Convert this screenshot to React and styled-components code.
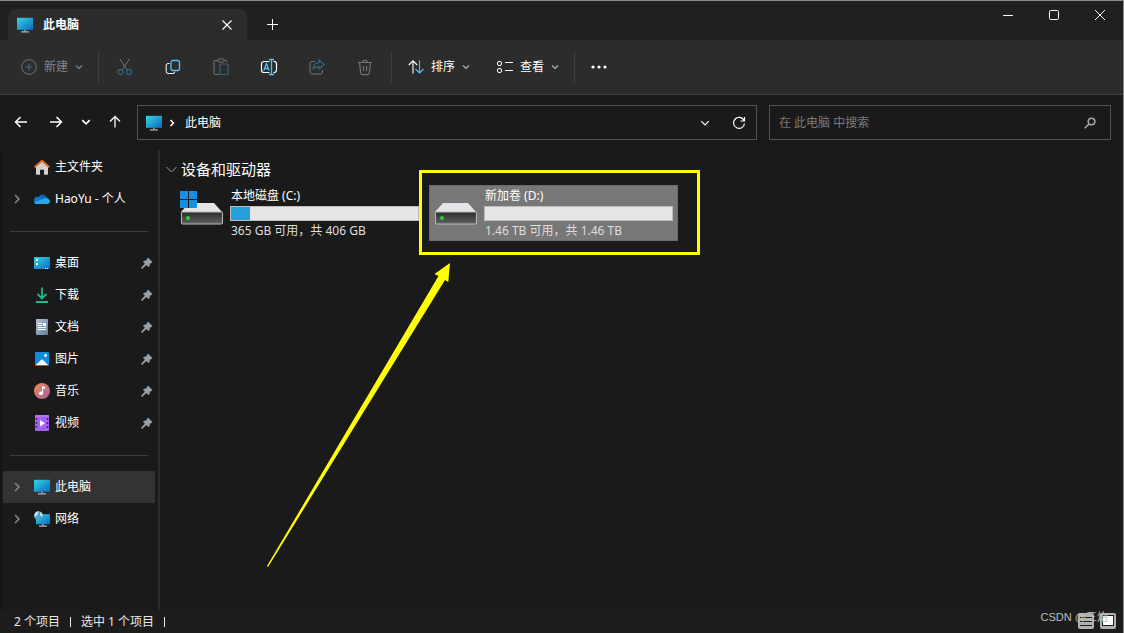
import React from "react";
import styled, { createGlobalStyle } from "styled-components";

const Global = createGlobalStyle`
  *, *::before, *::after { box-sizing: border-box; }
  body { margin: 0; background: #1a1a1a; }
  button, input { font: inherit; color: inherit; }
  svg { display: block; flex: none; }
`;

const Window = styled.div`
  display: flex;
  flex-direction: column;
  min-height: 100vh;
  border-top: 1px solid #8a8d8d;
  border-right: 1px solid #8a8a8a;
  background: #1a1a1a;
  color: #fff;
  font: 12px/16px "Noto Sans", "Noto Sans CJK SC", sans-serif;
`;

/* Title bar */
const TitleBar = styled.header`
  display: flex;
  align-items: flex-end;
  height: 39px;
  padding-left: 8px;
  background: #202020;
`;

const Tab = styled.div`
  display: flex;
  align-items: center;
  gap: 10px;
  width: 239px;
  height: 31px;
  padding: 0 10px 0 9px;
  border-radius: 8px 8px 0 0;
  background: #2c2c2c;
  font-weight: 700;
`;

const TabTitle = styled.span`
  flex: 1;
`;

const PlainButton = styled.button`
  display: inline-flex;
  align-items: center;
  justify-content: center;
  flex: none;
  width: ${(p) => p.$w || 20}px;
  height: ${(p) => p.$h || 20}px;
  padding: 0;
  border: 0;
  background: transparent;
  color: #fff;
`;

const NewTab = styled(PlainButton)`
  margin-left: 10px;
`;

const WindowControls = styled.div`
  display: flex;
  align-self: flex-start;
  margin-left: auto;
`;

/* Command bar */
const Toolbar = styled.div`
  display: flex;
  align-items: center;
  height: 55px;
  padding-left: 21px;
  border-bottom: 1px solid #3c3c3c;
  background: #2c2c2c;
`;

const Command = styled.button`
  display: flex;
  align-items: center;
  gap: 7px;
  height: 32px;
  padding: 0;
  margin-right: ${(p) => p.$after}px;
  border: 0;
  background: transparent;
  color: ${(p) => (p.$dim ? "#858585" : "#fff")};
`;

const ToolDivider = styled.span`
  width: 1px;
  height: 32px;
  background: #3f3f3f;
`;

const ToolIcons = styled.div`
  display: flex;
  padding: 0 2px;
`;

const SortGroup = styled.div`
  display: flex;
  padding-left: 16px;
`;

/* Navigation row */
const NavBar = styled.div`
  display: flex;
  align-items: center;
  height: 55px;
  padding-right: 12px;
`;

const NavButtons = styled.div`
  display: flex;
  align-items: center;
  align-self: flex-start;
  flex: none;
  width: 137px;
  height: 54px;
  padding-left: 11px;
`;

const AddressBar = styled.div`
  display: flex;
  align-items: center;
  gap: 7px;
  flex: 620 1 620px;
  min-width: 0;
  height: 35px;
  padding-left: 8px;
  border: 1px solid #535353;
`;

const Crumb = styled.a`
  flex: 1;
  padding-left: 3px;
  color: #fff;
  text-decoration: none;
`;

const SearchBox = styled.label`
  display: flex;
  align-items: center;
  flex: 342 1 342px;
  min-width: 0;
  height: 35px;
  margin-left: 12px;
  padding: 0 14px 0 9px;
  border: 1px solid #535353;
`;

const SearchInput = styled.input`
  flex: 1;
  min-width: 0;
  padding: 0;
  border: 0;
  outline: 0;
  background: transparent;
  &::placeholder { color: #7a7a7a; opacity: 1; }
`;

/* Body */
const Body = styled.div`
  display: flex;
  flex: 1;
`;

const Sidebar = styled.nav`
  flex: none;
  width: 160px;
  padding: 1px 3px 0 1px;
  border-left: 2px solid #151515;
  border-right: 2px solid #2b2b2b;
`;

const SideItem = styled.a`
  display: flex;
  align-items: center;
  height: 32px;
  padding: 0 2px 0 9px;
  border-radius: 2px;
  background: ${(p) => (p.$active ? "#333" : "transparent")};
  color: #fff;
  text-decoration: none;
`;

const Expander = styled.span`
  width: 22px;
  color: #858585;
`;

const SideLabel = styled.span`
  flex: 1;
  margin-left: 5px;
  white-space: nowrap;
`;

const SideDivider = styled.hr`
  height: 1px;
  margin: 16px 7px 15px;
  border: 0;
  background: #3d3d3d;
`;

const Content = styled.main`
  flex: 1;
  padding: 9px 6px 0;
`;

const GroupHeading = styled.h2`
  display: flex;
  align-items: center;
  gap: 4px;
  height: 20px;
  margin: 0 0 6px;
  font-size: 15px;
  font-weight: 400;
  line-height: 20px;
`;

const Drives = styled.div`
  display: flex;
  gap: 5px;
  padding-left: 9px;
`;

const DriveTile = styled.div`
  position: relative;
  display: flex;
  gap: 7px;
  width: 249px;
  height: 56px;
  padding: 2px 0 0 4px;
  border: 1px solid ${(p) => (p.$selected ? "#6a6a6a" : "transparent")};
  background: ${(p) => (p.$selected ? "#777" : "transparent")};
`;

const DriveInfo = styled.div`
  width: 189px;
`;

const DriveName = styled.div`
  padding-left: 1px;
`;

const Capacity = styled.div`
  height: 15px;
  margin: 2px 0;
  border: 1px solid #bcbcbc;
  background: #e6e6e6;
`;

const Used = styled.div`
  width: ${(p) => p.$percent}%;
  height: 100%;
  background: #26a0da;
`;

const DriveSpace = styled.div`
  padding-left: 1px;
  color: #dedede;
  white-space: nowrap;
`;

const Highlight = styled.div`
  position: absolute;
  left: -11px;
  top: -16px;
  width: 281px;
  height: 85px;
  border: 3px solid #ff0;
`;

const Pointer = styled.svg`
  position: absolute;
  left: -163px;
  top: 77px;
`;

/* Status bar */
const StatusBar = styled.footer`
  position: relative;
  display: flex;
  align-items: center;
  gap: 10px;
  height: 23px;
  padding: 0 7px 0 14px;
  background: #1c1c1c;
  color: #e8e8e8;
`;

const StatusDivider = styled.span`
  width: 1px;
  height: 10px;
  background: #eee;
`;

const ViewButtons = styled.div`
  display: flex;
  gap: 6px;
  margin: 0 0 2px auto;
`;

const Watermark = styled.span`
  position: absolute;
  right: 15px;
  top: -1px;
  color: #bdbdbd;
  font: 11px/16px "Liberation Sans", "Noto Sans CJK SC", sans-serif;
`;

const Stroke = ({ w = 16, h = w, vb, sw = 1, children, ...rest }) => (
  <svg width={w} height={h} viewBox={vb || `0 0 ${w} ${h}`} fill="none" stroke="currentColor" strokeWidth={sw} aria-hidden="true" {...rest}>
    {children}
  </svg>
);

const ChevronDown = ({ size = 8, sw = 1.2, color }) => (
  <Stroke w={size} vb="0 0 8 8" sw={sw} color={color}><path d="M1 2.500l3 3 3-3" /></Stroke>
);

const ChevronRight = () => (
  <Stroke w={10} sw={1.6}><path d="M3 1l4 4-4 4" /></Stroke>
);

const Monitor = () => (
  <svg width="16" height="16" viewBox="0 0 16 16" aria-hidden="true">
    <defs>
      <linearGradient id="screen" x1="0" y1="0" x2="1" y2="1">
        <stop stopColor="#35d4e2" /><stop offset="1" stopColor="#0c6ac4" />
      </linearGradient>
    </defs>
    <path d="M7 12h2v2.500H7z" fill="#7c8791" />
    <path d="M4 14.300h8v1.200H4z" fill="#b5bdc4" />
    <path d="M0 .8h16v12H0z" fill="url(#screen)" />
  </svg>
);

const NetworkIcon = () => (
  <svg width="16" height="16" viewBox="0 0 16 16" aria-hidden="true">
    <path d="M8 13h2v2H8z" fill="#7c8791" /><path d="M5 14.500h8v1.200H5z" fill="#b5bdc4" />
    <path d="M2 3.200h14v10H2z" fill="url(#screen)" />
    <circle cx="4.500" cy="4.700" r="4.500" fill="#4d9fca" />
    <path d="M.4 4C1 1.500 3 .2 5 .3L4 2.400l-1 2L.8 6zM6 1l2.500 2-.3 3-2-1.500z" fill="#c7e6f2" />
  </svg>
);

const HomeIcon = () => (
  <svg width="16" height="16" viewBox="0 0 16 16" aria-hidden="true">
    <path d="M2 6.500L8 1.500l6 5V15a.7.7 0 0 1-.7.7H10v-5H6v5H2.700A.7.7 0 0 1 2 15z" fill="#d2d2d2" />
    <path d="M.7 8.200L8 1.700l7.300 6.500" fill="none" stroke="#e8711b" strokeWidth="2" strokeLinejoin="round" />
  </svg>
);

const CloudIcon = () => (
  <svg width="16" height="16" viewBox="0 0 16 16" aria-hidden="true">
    <path d="M4.500 6A4.600 4.600 0 0 1 13 7.200L9 10H2z" fill="#0a63c2" />
    <path d="M3.500 13a3.600 3.600 0 0 1 .3-7.200c2 0 3.200.8 5 2.200L6 13z" fill="#0f78d4" />
    <path d="M2.500 13C1 13 .3 12.300.3 11.300L9 8c1-.7 2-1 3.300-1C14.600 7.300 16 8.700 16 10.300 16 12 14.800 13 13.200 13z" fill="#28a8ea" />
  </svg>
);

const DesktopIcon = () => (
  <svg width="16" height="16" viewBox="0 0 16 16" aria-hidden="true">
    <rect y="2" width="16" height="12" rx="1" fill="url(#screen)" />
    <path d="M2 4h2v2H2zM2 8h2v2H2z" fill="#fff" />
    <path d="M11 13h1v1h-1zM13 13h1v1h-1z" fill="#fff" />
  </svg>
);

const DownloadIcon = () => (
  <Stroke sw={1.8}>
    <path d="M8 .5v11M3.500 7l4.500 4.500L12.500 7" stroke="#20b78a" />
    <path d="M2 15h12" stroke="#2ac4a0" />
  </Stroke>
);

const DocumentIcon = () => (
  <svg width="16" height="16" viewBox="0 0 16 16" aria-hidden="true">
    <defs><linearGradient id="paper" x1="0" y1="0" x2="1" y2="1"><stop stopColor="#b5c6d6" /><stop offset="1" stopColor="#5e7d9c" /></linearGradient></defs>
    <rect x="2" width="12" height="16" rx="1" fill="url(#paper)" />
    <path d="M4 4.500h4M4 6.500h4M4 8.500h8M4 10.500h8" stroke="#fff" />
    <path d="M9 4h3v3H9z" fill="#fff" />
  </svg>
);

const PictureIcon = () => (
  <svg width="16" height="16" viewBox="0 0 16 16" aria-hidden="true">
    <rect x="1" y="1" width="14" height="14" rx="1" fill="#128bdc" />
    <path d="M2 14l5.200-5.200a1.200 1.200 0 0 1 1.600 0L14 14z" fill="#fff" />
    <circle cx="11.500" cy="4.500" r="1.400" fill="#fff" />
  </svg>
);

const MusicIcon = () => (
  <svg width="16" height="16" viewBox="0 0 16 16" aria-hidden="true">
    <defs><linearGradient id="disc" x1="0" y1="0" x2="1" y2="1"><stop stopColor="#f18b4e" /><stop offset="1" stopColor="#a05fa7" /></linearGradient></defs>
    <circle cx="8" cy="8" r="8" fill="url(#disc)" />
    <path d="M8 3l3 1v2L9 5.500v5a2 1.800 0 1 1-1-1.700z" fill="#fff" />
  </svg>
);

const VideoIcon = () => (
  <svg width="16" height="16" viewBox="0 0 16 16" aria-hidden="true">
    <rect x="1" width="14" height="16" rx="1" fill="#a562ef" />
    <path d="M1 1h14" stroke="#bf8df5" />
    <path d="M2.500 3v12M13.500 3v12" stroke="#4b1d8a" strokeWidth="1.500" strokeDasharray="2 2" />
    <path d="M6 5l5 3.200-5 3.200z" fill="#fff" />
  </svg>
);

const PinIcon = () => (
  <svg width="12" height="12" viewBox="0 0 12 12" aria-hidden="true">
    <path d="M7 .8L11.200 5 10.500 5.800 9 6.200 8 9.800 5.200 7.900 1.300 11.500l-.9.100.2-1L4 6.800 2.200 4.400 6 3.200l.2-1.700z" fill="#97a1aa" stroke="#97a1aa" strokeWidth=".5" />
  </svg>
);

const DriveIcon = ({ system }) => (
  <svg width="43" height="44" viewBox="0 0 43 44" aria-hidden="true">
    <defs><linearGradient id="case" x1="0" y1="0" x2="0" y2="1"><stop stopColor="#2c2c2c" /><stop offset="1" stopColor="#626262" /></linearGradient></defs>
    <path d="M9 15h25l8 9H1z" fill="#e2e4e7" />
    <rect x="1.500" y="24" width="41" height="12" rx="1" fill="url(#case)" stroke="#b9b9b9" />
    <circle cx="8" cy="30" r="2" fill="#22d43a" />
    {system && (
      <>
        <path d="M0 3h17v17H0z" fill="#1a1a1a" />
        <path d="M0 3h8v8H0zM9 3h8v8H9zM0 12h8v8H0zM9 12h8v8H9z" fill="#1790e0" />
      </>
    )}
  </svg>
);

const DIM = "#737373";
const DIM_BLUE = "#34617b";
const BLUE = "#4cc2ff";

const tools = [
  ["剪切", <Stroke w={18} color={DIM}><path d="M4 1l7.500 11.500M13.500 1L6 12.500" /><g stroke={DIM_BLUE} strokeWidth="1.300"><circle cx="4.500" cy="14" r="2.500" /><circle cx="13" cy="14" r="2.500" /></g></Stroke>],
  ["复制", <Stroke w={16}><path d="M4.500 4.500H3A1.800 1.800 0 0 0 1.200 6.300v6.200A2 2 0 0 0 3.200 14.500H8a1.800 1.800 0 0 0 1.800-1.800" /><rect x="6" y="1.500" width="8.500" height="10" rx="2" stroke={BLUE} strokeWidth="1.300" /></Stroke>],
  ["粘贴", <Stroke w={18} color={DIM}><path d="M6 2.500H3A1 1 0 0 0 2 3.500v12a1 1 0 0 0 1 1h4M12 2.500h2a1 1 0 0 1 1 1V4" /><rect x="5.500" y="1" width="6.500" height="3" rx="1.500" /><rect x="8" y="6" width="8" height="10.500" rx="1" stroke={DIM_BLUE} strokeWidth="1.200" /></Stroke>],
  ["重命名", <Stroke w={18}><path d="M9.500 3.500H4A2.500 2.500 0 0 0 1.500 6v6A2.500 2.500 0 0 0 4 14.500h5.500M13.500 3.500A2.500 2.500 0 0 1 16.500 6v6a2.500 2.500 0 0 1-3 2.500" strokeWidth="1.200" /><path d="M9 1.500h5M9 16.500h5M11.500 1.500v15M3.800 12.500L6.500 5.500l2.700 7M4.700 10.500h3.600" stroke={BLUE} strokeWidth="1.300" /></Stroke>],
  ["共享", <Stroke w={18} color={DIM}><path d="M7 3.500H4A2 2 0 0 0 2 5.500v8.500a2 2 0 0 0 2 2h8.500a2 2 0 0 0 2-2v-2" /><path d="M11 2l5 4.500L11 11V8.500C8 8.500 6.200 9.300 5 11.500 5 7.500 7.500 5 11 4.700z" stroke={DIM_BLUE} strokeWidth="1.300" /></Stroke>],
  ["删除", <Stroke w={18} color={DIM}><path d="M2 4.500h14M7 4.200a2 2 0 0 1 4 0M3.500 4.500l1.300 11a1.500 1.500 0 0 0 1.500 1.200h5.400a1.500 1.500 0 0 0 1.500-1.200l1.300-11M7.500 8v5M10.500 8v5" strokeWidth="1.200" /></Stroke>],
];

const quick = [
  ["桌面", <DesktopIcon />],
  ["下载", <DownloadIcon />],
  ["文档", <DocumentIcon />],
  ["图片", <PictureIcon />],
  ["音乐", <MusicIcon />],
  ["视频", <VideoIcon />],
];

const SideRow = ({ label, icon, expandable, pinned, active }) => (
  <SideItem href="#" $active={active}>
    <Expander>{expandable && <ChevronRight />}</Expander>
    {icon}
    <SideLabel>{label}</SideLabel>
    {pinned && <PinIcon />}
  </SideItem>
);

const Drive = ({ name, space, used, system, selected, children }) => (
  <DriveTile $selected={selected}>
    <DriveIcon system={system} />
    <DriveInfo>
      <DriveName>{name}</DriveName>
      <Capacity><Used $percent={used} /></Capacity>
      <DriveSpace>{space}</DriveSpace>
    </DriveInfo>
    {children}
  </DriveTile>
);

export default function App() {
  return (
    <>
      <Global />
      <Window>
        <TitleBar>
          <Tab>
            <Monitor />
            <TabTitle>此电脑</TabTitle>
            <PlainButton aria-label="关闭标签页"><Stroke w={10} sw={1.1}><path d="M.5.5l9 9M9.500.5l-9 9" /></Stroke></PlainButton>
          </Tab>
          <NewTab $w={30} $h={32} aria-label="新建标签页"><Stroke w={11}><path d="M5.500 0v11M0 5.500h11" /></Stroke></NewTab>
          <WindowControls>
            <PlainButton $w={46} $h={28} aria-label="最小化"><Stroke w={10}><path d="M0 5.500h10" /></Stroke></PlainButton>
            <PlainButton $w={46} $h={28} aria-label="最大化"><Stroke w={10}><rect x=".5" y=".5" width="9" height="9" rx="1" /></Stroke></PlainButton>
            <PlainButton $w={46} $h={28} aria-label="关闭"><Stroke w={10}><path d="M0 0l10 10M10 0L0 10" /></Stroke></PlainButton>
          </WindowControls>
        </TitleBar>

        <Toolbar>
          <Command $dim $after={15}>
            <Stroke w={16} color={DIM}><circle cx="8" cy="8" r="7.300" /><path d="M8 4.500v7M4.500 8h7" stroke="#3b7596" /></Stroke>
            新建
            <ChevronDown />
          </Command>
          <ToolDivider />
          <ToolIcons>
            {tools.map(([label, icon]) => (
              <PlainButton key={label} $w={48} $h={32} aria-label={label}>{icon}</PlainButton>
            ))}
          </ToolIcons>
          <ToolDivider />
          <SortGroup>
            <Command $after={27}>
              <Stroke w={16} sw={1.1}><path d="M5 14.500V2M.8 6L5 1.800 9.200 6" /><path d="M11.500 1.500V14M7.500 10l4 4 4-4" stroke={BLUE} /></Stroke>
              排序
              <ChevronDown color="#b4b4b4" />
            </Command>
            <Command $after={15}>
              <Stroke w={16}><rect x=".5" y="2.500" width="4" height="4" rx="1.500" /><rect x=".5" y="9.500" width="4" height="4" rx="1.500" /><path d="M8 3.500h8M8 11.500h8" /></Stroke>
              查看
              <ChevronDown color="#b4b4b4" />
            </Command>
          </SortGroup>
          <ToolDivider />
          <PlainButton $w={48} $h={32} aria-label="更多">
            <svg width="16" height="4" viewBox="0 0 16 4" fill="#fff" aria-hidden="true"><circle cx="2" cy="2" r="1.600" /><circle cx="8" cy="2" r="1.600" /><circle cx="14" cy="2" r="1.600" /></svg>
          </PlainButton>
        </Toolbar>

        <NavBar>
          <NavButtons>
            <PlainButton $w={20} aria-label="后退"><Stroke w={14} sw={1.5}><path d="M13 7H1.500M6.500 2l-5 5 5 5" /></Stroke></PlainButton>
            <PlainButton $w={50} aria-label="前进"><Stroke w={14} sw={1.5}><path d="M1 7h11.500M7.500 2l5 5-5 5" /></Stroke></PlainButton>
            <PlainButton $w={10} aria-label="最近浏览的位置"><ChevronDown size={10} sw={1.3} /></PlainButton>
            <PlainButton $w={48} aria-label="向上"><Stroke w={14} sw={1.3}><path d="M7 12.500V1.500M2 6.500l5-5 5 5" /></Stroke></PlainButton>
          </NavButtons>
          <AddressBar>
            <Monitor />
            <Stroke w={6} h={8} sw={1.5}><path d="M1.500 1L4.500 4l-3 3" /></Stroke>
            <Crumb href="#">此电脑</Crumb>
            <PlainButton aria-label="展开地址"><ChevronDown size={10} sw={1} /></PlainButton>
            <PlainButton aria-label="刷新" $w={34}><Stroke w={14} sw={1.2}><path d="M12 4.500A5.500 5.500 0 1 0 12.500 7.500M12.500 1v4H8.500" /></Stroke></PlainButton>
          </AddressBar>
          <SearchBox>
            <SearchInput type="text" aria-label="搜索" placeholder="在 此电脑 中搜索" />
            <Stroke w={12} sw={1.6} color="#a6a6a6"><circle cx="7.500" cy="4.500" r="3.300" /><path d="M5 7L.7 11.300" /></Stroke>
          </SearchBox>
        </NavBar>

        <Body>
          <Sidebar>
            <SideRow label="主文件夹" icon={<HomeIcon />} />
            <SideRow label="HaoYu - 个人" icon={<CloudIcon />} expandable />
            <SideDivider />
            {quick.map(([label, icon]) => <SideRow key={label} label={label} icon={icon} pinned />)}
            <SideDivider />
            <SideRow label="此电脑" icon={<Monitor />} expandable active />
            <SideRow label="网络" icon={<NetworkIcon />} expandable />
          </Sidebar>
          <Content>
            <GroupHeading>
              <Stroke w={11} color="#a0a0a0"><path d="M.5 3l5 5 5-5" /></Stroke>
              设备和驱动器
            </GroupHeading>
            <Drives>
              <Drive name="本地磁盘 (C:)" space="365 GB 可用，共 406 GB" used={10} system />
              <Drive name="新加卷 (D:)" space="1.46 TB 可用，共 1.46 TB" used={0} selected>
                <Highlight />
                <Pointer width="184" height="305" viewBox="0 0 184 305" aria-hidden="true">
                  <path d="M183 0l-15.500 11 4 2L0 303l1 1L178 17l3.300 2z" fill="#ff0" />
                </Pointer>
              </Drive>
            </Drives>
          </Content>
        </Body>

        <StatusBar>
          <span>2 个项目</span>
          <StatusDivider />
          <span>选中 1 个项目</span>
          <StatusDivider />
          <ViewButtons>
            <PlainButton $w={16} $h={16} aria-label="详细信息">
              <svg width="16" height="16" viewBox="0 0 16 16" aria-hidden="true"><rect width="16" height="16" rx="2" fill="#b0b0b0" /><path d="M2 4.500h12M2 8.500h12M2 12.500h12" stroke="#1c1c1c" /></svg>
            </PlainButton>
            <PlainButton $w={16} $h={16} aria-label="大缩略图">
              <svg width="16" height="16" viewBox="0 0 16 16" aria-hidden="true"><rect width="16" height="16" rx="2" fill="#b0b0b0" /><rect x="2.500" y="2.500" width="11" height="10" fill="#fff" stroke="#1c1c1c" /></svg>
            </PlainButton>
          </ViewButtons>
          <Watermark>CSDN @三炮</Watermark>
        </StatusBar>
      </Window>
    </>
  );
}
